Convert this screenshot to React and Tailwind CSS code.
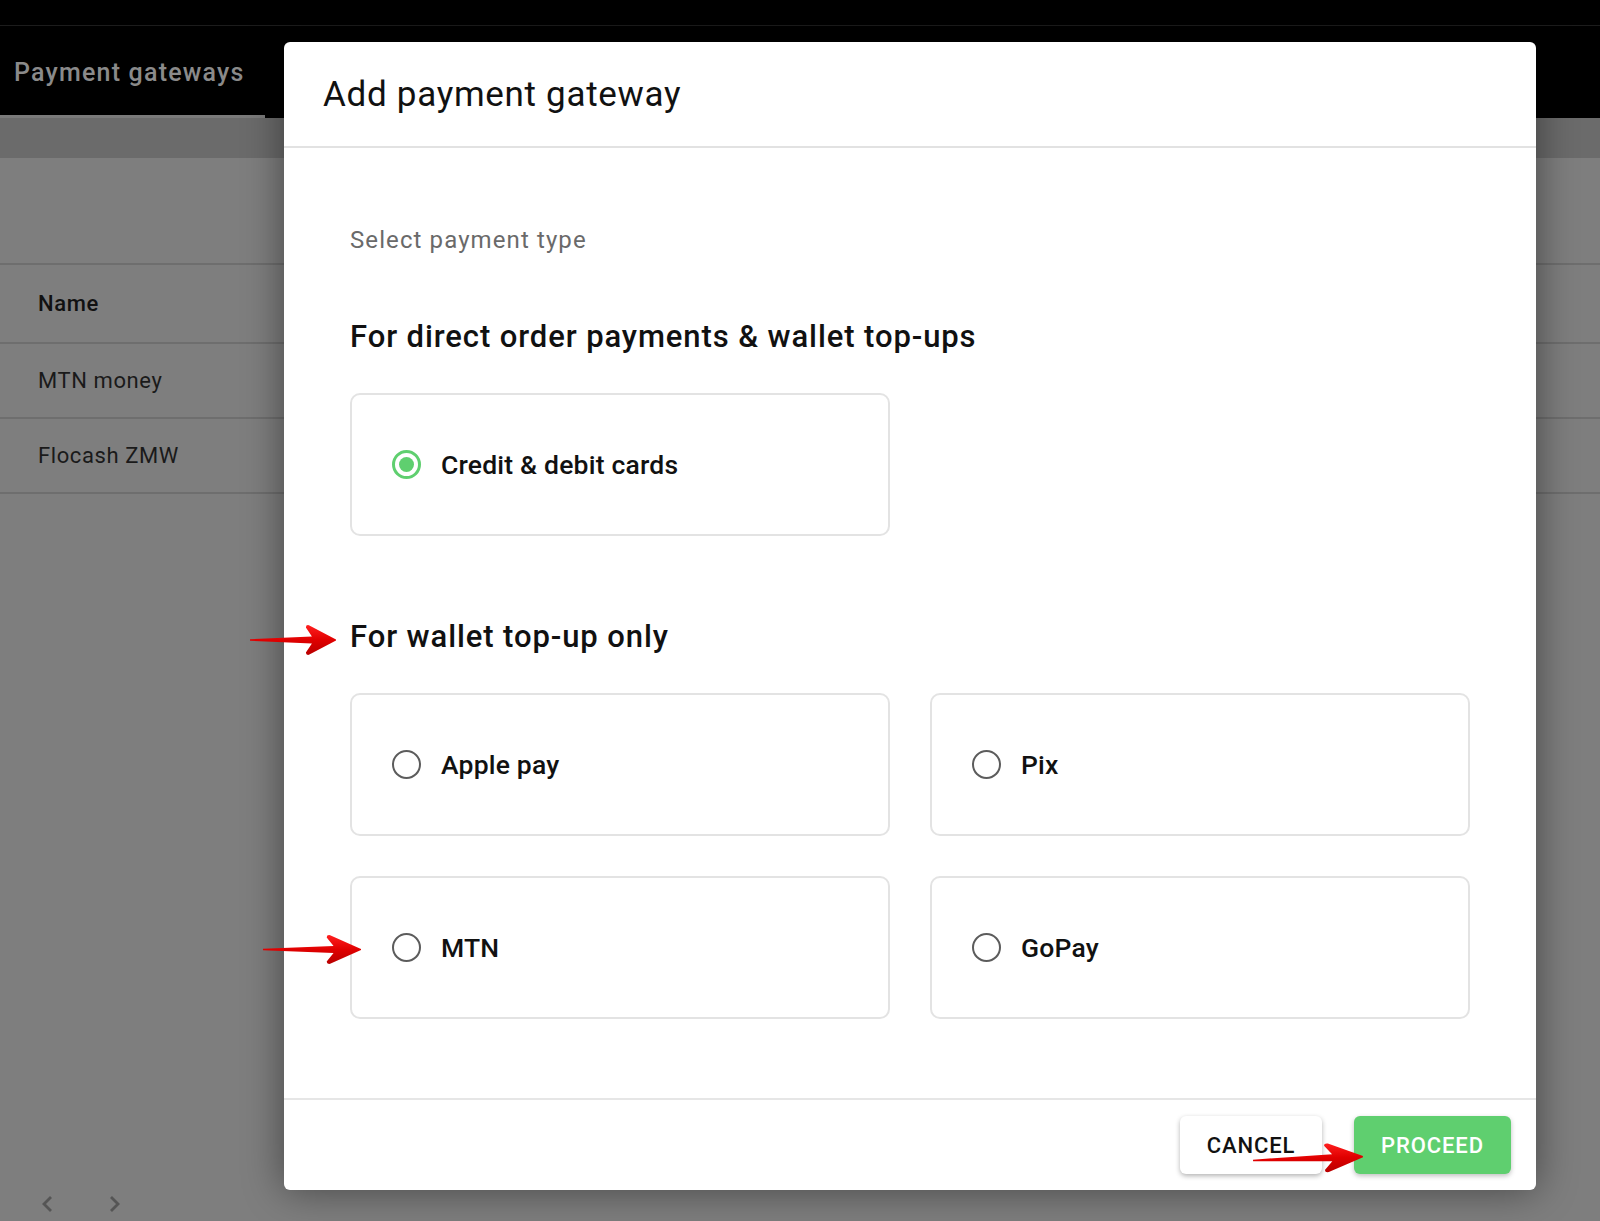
import React from "react";

const font = { fontFamily: "Roboto, 'Noto Sans', Arial, sans-serif" };

function RedArrow({ className }) {
  return (
    <svg
      className={className}
      viewBox="0 0 100 32"
      preserveAspectRatio="none"
      aria-hidden="true"
    >
      <defs>
        <linearGradient id="arrowRed" x1="0" y1="0" x2="0" y2="1">
          <stop offset="0" stopColor="#ff1f1f" />
          <stop offset="0.5" stopColor="#e00000" />
          <stop offset="1" stopColor="#b80000" />
        </linearGradient>
      </defs>
      <path
        d="M0 15.2 L72 12.4 L65 3.5 Q65 0.6 68.5 1.2 L100 15.4 L100 16.6 L68.5 30.8 Q65 31.4 65 28.5 L72 19.6 L0 16.8 Z"
        fill="url(#arrowRed)"
      />
    </svg>
  );
}

function Radio({ checked }) {
  if (checked)
    return (
      <span className="flex h-[29px] w-[29px] shrink-0 items-center justify-center rounded-full border-[3px] border-[#5fcf6f]">
        <span className="h-[15px] w-[15px] rounded-full bg-[#5fcf6f]" />
      </span>
    );
  return (
    <span className="h-[29px] w-[29px] shrink-0 rounded-full border-[2.5px] border-[#5c5c5c]" />
  );
}

function OptionCard({ label, checked }) {
  return (
    <div className="flex h-[143px] w-[540px] items-center gap-[20px] rounded-[10px] border-2 border-[#e3e3e3] bg-white pl-[40px]">
      <Radio checked={checked} />
      <span className="text-[26.5px] font-medium tracking-[0.2px] text-[#111]">
        {label}
      </span>
    </div>
  );
}

export default function App() {
  return (
    <div
      className="relative h-[1221px] w-[1600px] overflow-hidden bg-[#7e7e7e]"
      style={font}
    >
      {/* page behind the dialog */}
      <div className="h-[26px] border-b border-[#1c1c1c] bg-black" />
      <div className="flex h-[92px] items-end bg-black">
        <div className="flex h-[92px] w-[265px] flex-col justify-between">
          <div className="flex flex-1 items-center pl-[14px] pt-[4px] text-[25px] font-medium tracking-[1.2px] text-[#8a8a8a]">
            Payment gateways
          </div>
          <div className="h-[3px] bg-[#7a7a7a]" />
        </div>
      </div>
      <div className="h-[40px] bg-[#6b6b6b]" />
      <div className="h-[105px]" />
      <div className="border-t-2 border-[#6e6e6e]">
        <div className="flex h-[79px] items-center border-b-2 border-[#6e6e6e] pl-[38px] text-[22px] font-medium tracking-[0.6px] text-[#111]">
          Name
        </div>
        <div className="flex h-[75px] items-center border-b-2 border-[#6e6e6e] pl-[38px] text-[22px] tracking-[0.6px] text-[#1a1a1a]">
          MTN money
        </div>
        <div className="flex h-[75px] items-center border-b-2 border-[#6e6e6e] pl-[38px] text-[22px] tracking-[0.6px] text-[#1a1a1a]">
          Flocash ZMW
        </div>
      </div>
      <div className="absolute bottom-[5px] left-[36px] flex gap-[42px] text-[#555]">
        <svg width="24" height="24" viewBox="0 0 24 24" fill="none" stroke="currentColor" strokeWidth="2.8">
          <path d="M15 5l-7 7 7 7" />
        </svg>
        <svg width="24" height="24" viewBox="0 0 24 24" fill="none" stroke="currentColor" strokeWidth="2.8">
          <path d="M9 5l7 7-7 7" />
        </svg>
      </div>

      {/* dialog */}
      <div className="absolute left-[284px] top-[42px] flex h-[1148px] w-[1252px] flex-col rounded-[6px] bg-white shadow-[0_0_40px_rgba(0,0,0,0.45)]">
        <div className="flex h-[106px] shrink-0 items-center border-b-2 border-[#e2e2e2] pl-[39px] pt-[2px]">
          <h2 className="text-[35px] font-normal tracking-[0.7px] text-[#111]">
            Add payment gateway
          </h2>
        </div>
        <div className="flex-1 pl-[66px] pt-[78px]">
          <p className="text-[24px] leading-[28px] tracking-[1.1px] text-[#6a6a6a]">
            Select payment type
          </p>
          <h3 className="mt-[65px] text-[31px] font-medium leading-[36px] tracking-[0.9px] text-[#111]">
            For direct order payments &amp; wallet top-ups
          </h3>
          <div className="mt-[38px]">
            <OptionCard label="Credit & debit cards" checked />
          </div>
          <h3 className="mt-[83px] text-[31px] font-medium leading-[36px] tracking-[0.9px] text-[#111]">
            For wallet top-up only
          </h3>
          <div className="mt-[38px] grid w-[1120px] grid-cols-[540px_540px] gap-x-[40px] gap-y-[40px]">
            <OptionCard label="Apple pay" />
            <OptionCard label="Pix" />
            <OptionCard label="MTN" />
            <OptionCard label="GoPay" />
          </div>
        </div>
        <div className="flex h-[92px] shrink-0 items-center justify-end gap-[32px] border-t-2 border-[#e6e6e6] pr-[25px]">
          <button className="h-[58px] w-[142px] rounded-[6px] bg-white text-[22px] font-medium tracking-[0.04em] text-[#111] shadow-[0_2px_5px_rgba(0,0,0,0.3)]">
            CANCEL
          </button>
          <button className="h-[58px] w-[157px] rounded-[6px] bg-[#5fcf6f] text-[22px] font-medium tracking-[0.04em] text-white shadow-[0_2px_5px_rgba(0,0,0,0.25)]">
            PROCEED
          </button>
        </div>
      </div>

      {/* annotation arrows */}
      <RedArrow className="absolute left-[250px] top-[624px] h-[32px] w-[86px]" />
      <RedArrow className="absolute left-[263px] top-[934px] h-[31px] w-[98px]" />
      <RedArrow className="absolute left-[1253px] top-[1143px] h-[31px] w-[110px] -rotate-[2deg]" />
    </div>
  );
}
